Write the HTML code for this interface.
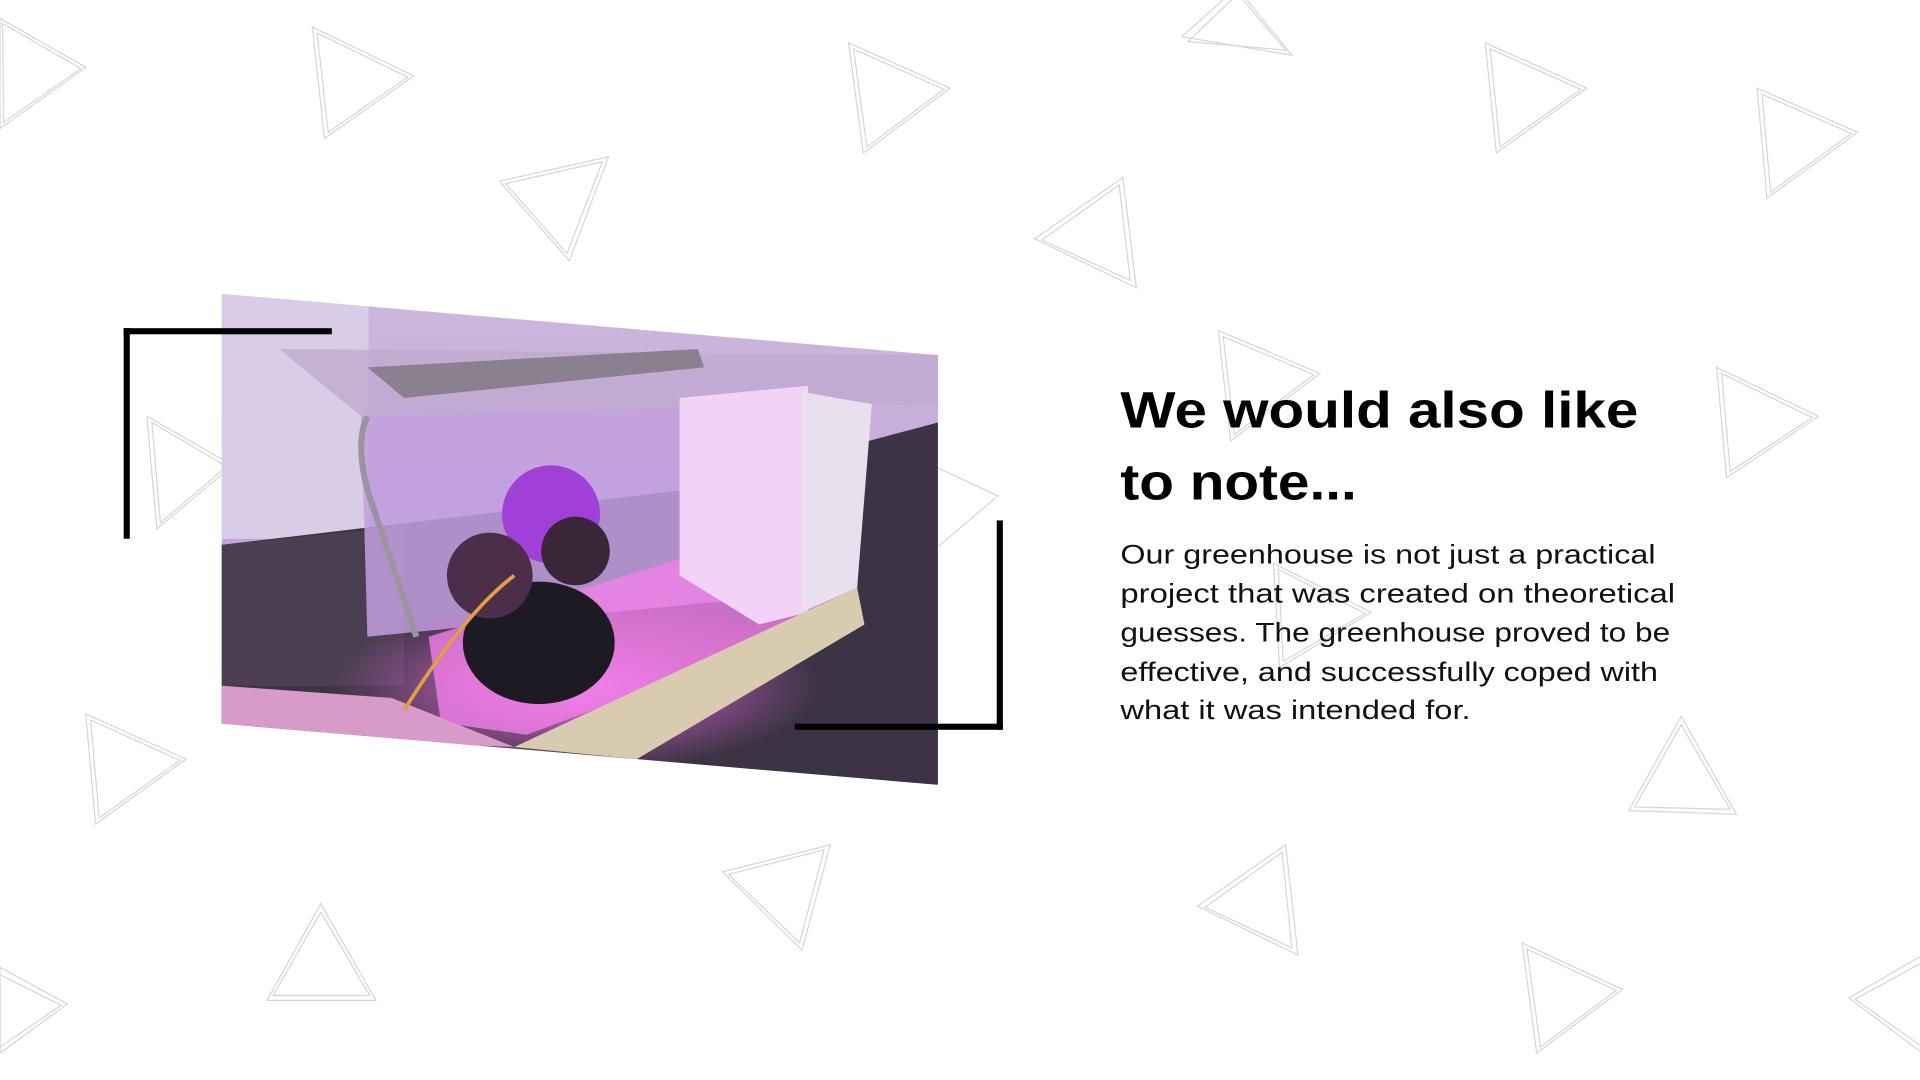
<!DOCTYPE html>
<html><head><meta charset="utf-8"><style>
html,body{margin:0;padding:0;background:#fff;width:1920px;height:1080px;overflow:hidden}
svg{display:block}
</style></head><body>
<svg width="1920" height="1080" viewBox="0 0 1568 882" xmlns="http://www.w3.org/2000/svg">
<defs>
<clipPath id="ph"><polygon points="181,240 766,290 766,641 181,591"/></clipPath>
<radialGradient id="glow" cx="0.5" cy="0.5" r="0.5"><stop offset="0" stop-color="#ff7ef0"/><stop offset="1" stop-color="#e060d8" stop-opacity="0"/></radialGradient>
<linearGradient id="wall" x1="0" y1="0" x2="0" y2="1"><stop offset="0" stop-color="#cdb8dc"/><stop offset="1" stop-color="#b892d8"/></linearGradient>
</defs>
<g fill="none" stroke="#d6d6d6" stroke-width="1">
<polygon points="0,15 70,55 0,105"/><polygon points="2,19 66,56 3,100"/>
<polygon points="255,22 338,62 265,113"/><polygon points="259,27 333,63 268,108"/>
<polygon points="408,148 497,128 465,213"/><polygon points="413,150 492,132 463,207"/>
<polygon points="693,35 776,72 705,125"/><polygon points="697,40 771,73 708,120"/>
<polygon points="965,30 1010,-10 1055,45"/><polygon points="970,34 1011,-5 1050,41"/>
<polygon points="845,195 917,145 928,235"/><polygon points="851,196 914,151 923,229"/>
<polygon points="1213,35 1296,72 1222,125"/><polygon points="1217,40 1291,73 1225,120"/>
<polygon points="1435,72 1517,108 1443,162"/><polygon points="1439,77 1512,109 1446,157"/>
<polygon points="995,270 1078,305 1005,360"/><polygon points="999,275 1073,306 1008,355"/>
<polygon points="1402,300 1485,340 1410,390"/><polygon points="1406,305 1480,341 1413,385"/>
<polygon points="120,340 190,380 128,432"/><polygon points="124,345 185,381 131,427"/>
<polygon points="740,370 815,405 750,460"/>
<polygon points="1040,460 1120,500 1045,545"/><polygon points="1044,465 1115,501 1048,540"/>
<polygon points="70,583 152,620 78,673"/><polygon points="74,588 147,621 81,668"/>
<polygon points="1330,662 1373,585 1418,665"/><polygon points="1335,659 1373,592 1413,661"/>
<polygon points="590,712 678,690 655,776"/><polygon points="595,714 673,694 653,770"/>
<polygon points="978,740 1050,690 1060,780"/><polygon points="984,741 1047,696 1055,774"/>
<polygon points="218,817 262,738 307,817"/><polygon points="223,813 262,745 302,813"/>
<polygon points="1243,770 1325,808 1255,860"/><polygon points="1247,775 1320,809 1258,855"/>
<polygon points="0,790 55,820 0,860"/><polygon points="0,796 50,821 0,855"/>
<polygon points="1570,780 1510,815 1570,860"/><polygon points="1570,786 1515,816 1570,855"/>
</g>
<g clip-path="url(#ph)">
<rect x="181" y="240" width="585" height="401" fill="url(#wall)"/>
<rect x="181" y="240" width="120" height="200" fill="#d8cce6"/>
<polygon points="181,445 560,400 766,345 766,641 181,591" fill="#3c3444"/>
<polygon points="181,445 330,430 330,560 181,560" fill="#4a3e50"/>
<polygon points="228,285 766,290 766,330 295,340" fill="#bfaad0" opacity="0.8"/>
<polygon points="295,340 710,330 700,480 300,520" fill="#c2a0de" opacity="0.85"/>
<polygon points="300,300 570,285 575,300 330,325" fill="#8a8090"/>
<ellipse cx="470" cy="560" rx="200" ry="70" fill="url(#glow)"/>
<polygon points="350,520 560,455 700,470 700,500 430,600 360,590" fill="#f080e8" opacity="0.8"/>
<polygon points="555,325 660,315 660,500 620,510 555,470" fill="#f2d2f6"/>
<polygon points="655,320 712,330 700,480 655,500" fill="#e8e0ee"/>
<polygon points="420,610 700,480 706,510 520,620" fill="#d8cbb0"/>
<polygon points="181,560 320,570 420,610 181,600" fill="#d89ac8"/>
<ellipse cx="440" cy="525" rx="62" ry="50" fill="#1e1a24"/>
<circle cx="450" cy="420" r="40" fill="#a040d8"/>
<circle cx="400" cy="470" r="35" fill="#4a2e4a"/>
<circle cx="470" cy="450" r="28" fill="#3a2638"/>
<path d="M300,340 Q290,360 300,400 L340,520" stroke="#9a94a0" stroke-width="5" fill="none"/>
<path d="M330,580 Q380,500 420,470" stroke="#e0a040" stroke-width="3" fill="none"/>
</g>
<g fill="#000">
<rect x="101" y="268" width="170" height="5"/>
<rect x="101" y="268" width="5" height="172"/>
<rect x="814" y="425" width="5" height="171"/>
<rect x="649" y="591" width="170" height="5"/>
</g>
<g font-family="Liberation Sans, sans-serif" fill="#000">
<text x="915" y="349" font-size="42" font-weight="bold" textLength="423" lengthAdjust="spacingAndGlyphs">We would also like</text>
<text x="915" y="408" font-size="42" font-weight="bold" textLength="193" lengthAdjust="spacingAndGlyphs">to note...</text>
<g font-size="22" fill="#111">
<text x="915" y="460" textLength="437" lengthAdjust="spacingAndGlyphs">Our greenhouse is not just a practical</text>
<text x="915" y="492" textLength="453" lengthAdjust="spacingAndGlyphs">project that was created on theoretical</text>
<text x="915" y="524" textLength="449" lengthAdjust="spacingAndGlyphs">guesses. The greenhouse proved to be</text>
<text x="915" y="556" textLength="439" lengthAdjust="spacingAndGlyphs">effective, and successfully coped with</text>
<text x="915" y="587" textLength="286" lengthAdjust="spacingAndGlyphs">what it was intended for.</text>
</g></g>
</svg>
</body></html>
